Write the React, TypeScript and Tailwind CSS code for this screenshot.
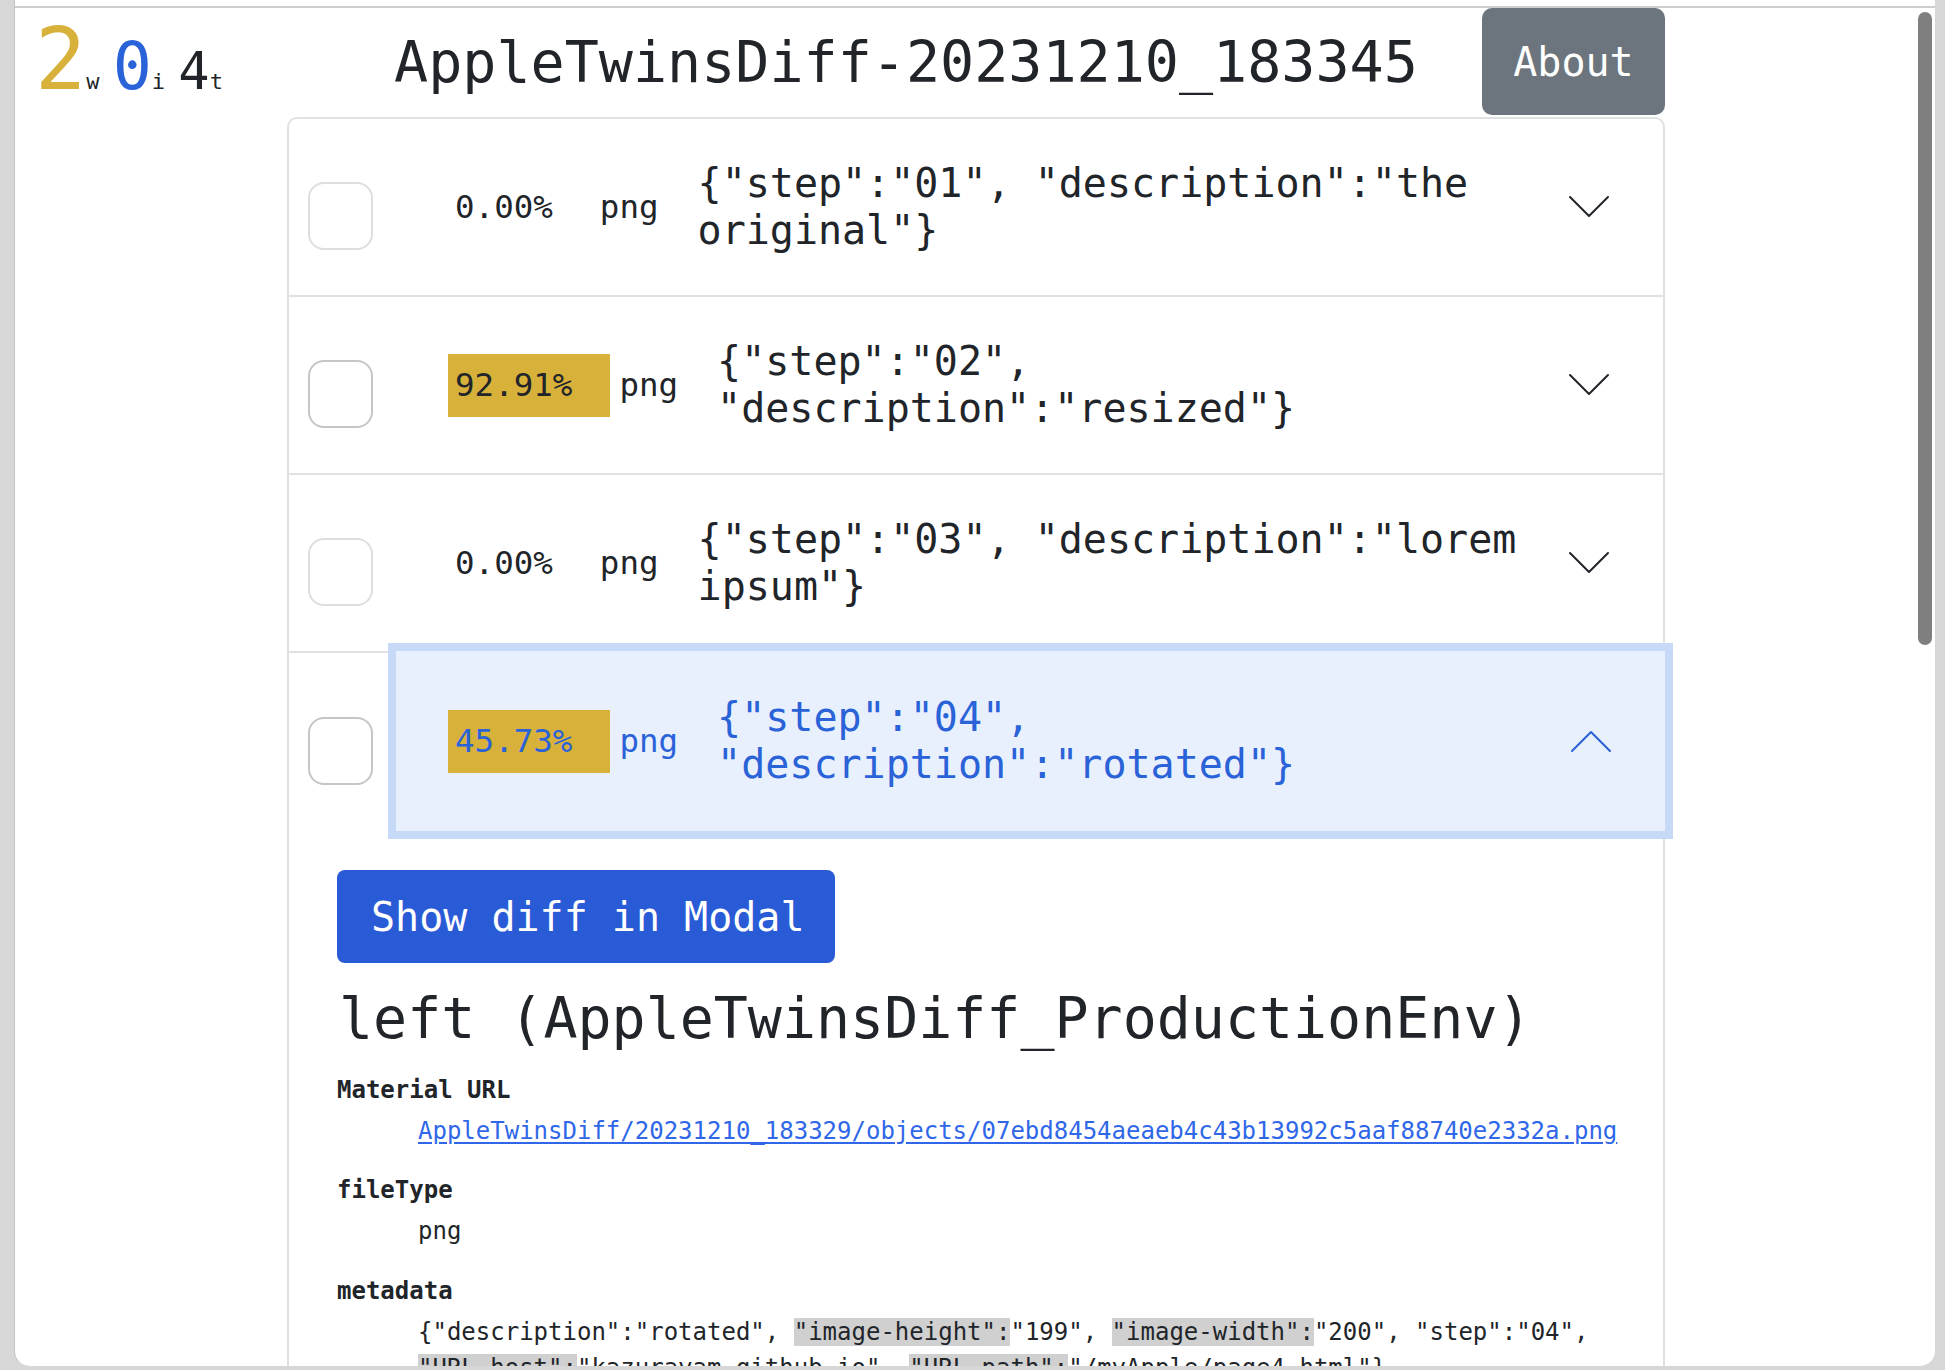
import React from "react";

type Row = {
  pct: string;
  hi: boolean;
  json: string;
  open?: boolean;
};

const rows: Row[] = [
  { pct: "0.00%", hi: false, json: '{"step":"01", "description":"the original"}' },
  { pct: "92.91%", hi: true, json: '{"step":"02", "description":"resized"}' },
  { pct: "0.00%", hi: false, json: '{"step":"03", "description":"lorem ipsum"}' },
  { pct: "45.73%", hi: true, json: '{"step":"04", "description":"rotated"}', open: true },
];

function Chevron({ up, color }: { up?: boolean; color: string }) {
  return (
    <svg width="42" height="24" viewBox="0 0 42 24" className="shrink-0 ml-[12px]">
      <polyline
        points={up ? "2,22 21,3 40,22" : "2,2 21,21 40,2"}
        fill="none"
        stroke={color}
        strokeWidth="2"
        strokeLinecap="round"
        strokeLinejoin="round"
      />
    </svg>
  );
}

function AccRow({ r, last }: { r: Row; last?: boolean }) {
  const open = !!r.open;
  return (
    <div className={"flex items-center h-[178px] " + (last ? "" : "border-b-2 border-[#dfe1e3]")}>
      <div
        className={
          "ml-[19px] mt-[18px] w-[65px] h-[68px] rounded-[16px] border-2 shrink-0 bg-white " +
          (r.hi ? "border-[#c6c6c6]" : "border-[#dedede]")
        }
      />
      <div
        className={
          "ml-[23px] flex-1 self-stretch flex items-center pl-[52px] pr-[53px] relative z-10 " +
          (open
            ? "bg-[#e8f0fd] text-[#2a62d8] shadow-[0_0_0_8px_#c6d9f7] mt-[-2px] h-[180px] mr-[-2px]"
            : "text-[#212529]")
        }
      >
        <span
          className={
            "text-[32.5px] leading-[63px] pl-[7px] pr-[38px] whitespace-nowrap " +
            (r.hi ? "bg-[#d8b13b]" : "")
          }
        >
          {r.pct}
        </span>
        <span className="ml-[9px] text-[32.5px] leading-[63px]">png</span>
        <span className="ml-[39px] flex-1 text-[40px] leading-[47px]">{r.json}</span>
        <Chevron up={open} color={open ? "#2a62d8" : "#212529"} />
      </div>
    </div>
  );
}

function Hl({ children }: { children: React.ReactNode }) {
  return <span className="bg-[#d0d0d0]">{children}</span>;
}

export default function App() {
  return (
    <div className="flex w-[1945px] h-[1370px] overflow-hidden bg-[#d7d7d7] pl-[14px] pr-[10px] pb-[4px] font-['DejaVu_Sans_Mono',monospace] text-[#212529]">
      <div className="relative flex-1 flex flex-col bg-white rounded-b-[15px] overflow-hidden border-l border-[#c2c2c2]">
        <div className="h-[6px] shrink-0" />
        <div className="h-[2px] bg-[#cecece] shrink-0" />

        {/* header */}
        <div className="flex h-[109px] shrink-0">
          <div className="w-[379px] pl-[20px] pt-[9px] flex items-baseline leading-none whitespace-pre">
            <span className="text-[85px] text-[#d8b13b]">2</span>
            <span className="text-[22px]">w </span>
            <span className="text-[65px] text-[#2a62d8]">0</span>
            <span className="text-[22px]">i </span>
            <span className="text-[52px]">4</span>
            <span className="text-[22px]">t</span>
          </div>
          <div className="w-[1088px] text-[56.7px] leading-[109px] whitespace-nowrap">
            AppleTwinsDiff-20231210_183345
          </div>
          <div className="w-[183px] h-[107px] bg-[#6c757d] rounded-[10px] text-white text-[40px] flex items-center justify-center">
            About
          </div>
        </div>

        {/* accordion */}
        <div className="ml-[272px] w-[1378px] flex-1 border-2 border-b-0 border-[#dfe1e3] rounded-t-[10px]">
          {rows.map((r, i) => (
            <AccRow key={i} r={r} last={i === rows.length - 1} />
          ))}
          <div className="px-[48px] pt-[39px]">
            <div className="inline-flex items-center h-[93px] w-[498px] pl-[34px] bg-[#2a5bd6] rounded-[8px] text-white text-[40px]">
              Show diff in Modal
            </div>
            <div className="mt-[21px] pl-[2px] text-[56.6px] leading-[68px] whitespace-nowrap">
              left (AppleTwinsDiff_ProductionEnv)
            </div>
            <div className="mt-[20px] text-[24px] leading-[36px]">
              <div className="font-bold">Material URL</div>
              <div className="mt-[5px] ml-[81px]">
                <span className="text-[#2f67e8] underline underline-offset-[3px]">
                  AppleTwinsDiff/20231210_183329/objects/07ebd8454aeaeb4c43b13992c5aaf88740e2332a.png
                </span>
              </div>
              <div className="mt-[23px] font-bold">fileType</div>
              <div className="mt-[5px] ml-[81px]">png</div>
              <div className="mt-[24px] font-bold">metadata</div>
              <div className="mt-[5px] ml-[81px] mr-[10px]">
                {'{"description":"rotated", '}
                <Hl>"image-height":</Hl>
                {'"199", '}
                <Hl>"image-width":</Hl>
                {'"200", "step":"04", '}
                <Hl>"URL_host":</Hl>
                {'"kazurayam.github.io", '}
                <Hl>"URL_path":</Hl>
                {'"/myApple/page4.html"}'}
              </div>
            </div>
          </div>
        </div>

        {/* scrollbar thumb */}
        <div className="absolute right-[3px] top-[12px] w-[14px] h-[633px] rounded-full bg-[#7f7f7f]" />
      </div>
    </div>
  );
}
